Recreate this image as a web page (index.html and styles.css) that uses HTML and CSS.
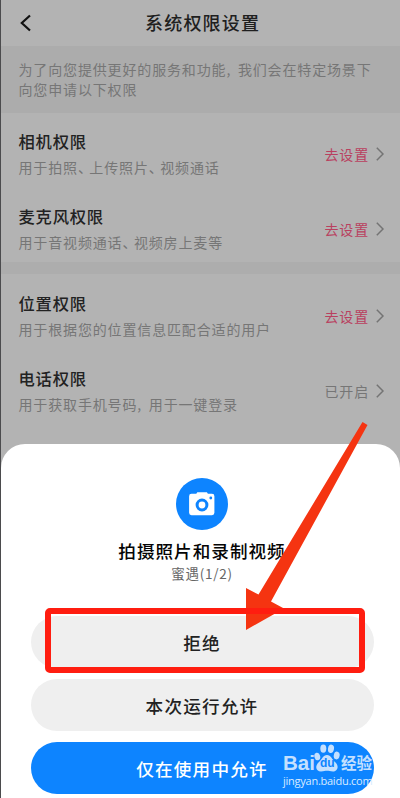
FILE: index.html
```html
<!DOCTYPE html>
<html lang="zh-CN">
<head>
<meta charset="utf-8">
<title>系统权限设置</title>
<link rel="stylesheet" href="styles.css">
</head>
<body>
<div class="screen">
  <header class="topbar">
    <svg class="back" viewBox="0 0 12 18"><path d="M10 1.500 1.800 9l8.200 7.500"/></svg>
    <h1>系统权限设置</h1>
  </header>
  <p class="notice">为了向您提供更好的服务和功能<span class="comma">,</span>我们会在特定场景下<br>向您申请以下权限</p>
  <main>
    <section class="group">
      <div class="item">
        <div class="info"><h2>相机权限</h2><p>用于拍照<span class="punct">、</span>上传照片<span class="punct">、</span>视频通话</p></div>
        <a class="action">去设置<svg class="chev" viewBox="0 0 8 14"><path d="M.8.8 7 7 .8 13.200"/></svg></a>
      </div>
      <div class="item">
        <div class="info"><h2>麦克风权限</h2><p>用于音视频通话<span class="punct">、</span>视频房上麦等</p></div>
        <a class="action">去设置<svg class="chev" viewBox="0 0 8 14"><path d="M.8.8 7 7 .8 13.200"/></svg></a>
      </div>
    </section>
    <section class="group">
      <div class="item">
        <div class="info"><h2>位置权限</h2><p>用于根据您的位置信息匹配合适的用户</p></div>
        <a class="action">去设置<svg class="chev" viewBox="0 0 8 14"><path d="M.8.8 7 7 .8 13.200"/></svg></a>
      </div>
      <div class="item">
        <div class="info"><h2>电话权限</h2><p>用于获取手机号码<span class="comma">,</span>用于一键登录</p></div>
        <a class="action on">已开启<svg class="chev" viewBox="0 0 8 14"><path d="M.8.8 7 7 .8 13.200"/></svg></a>
      </div>
    </section>
  </main>
  <div class="sheet">
    <svg class="camera" viewBox="0 0 52 52">
      <circle cx="26" cy="26" r="26" fill="#0d84ff"/>
      <path fill="#fff" d="M15.500 15.800h4.800l1-1.500h9.600l1 1.500h4.100a2.400 2.400 0 0 1 2.400 2.400v16.600a2.400 2.400 0 0 1-2.400 2.400h-20.500a2.400 2.400 0 0 1-2.400-2.400V18.200a2.400 2.400 0 0 1 2.400-2.400z"/>
      <circle cx="26" cy="27" r="4.900" fill="none" stroke="#0d84ff" stroke-width="3"/>
      <circle cx="34.800" cy="20" r="1.400" fill="#0d84ff"/>
    </svg>
    <h2 class="ask">拍摄照片和录制视频</h2>
    <p class="app">蜜遇(1/2)</p>
    <div class="buttons">
      <button>拒绝</button>
      <button>本次运行允许</button>
      <button class="primary">仅在使用中允许</button>
    </div>
  </div>
  <svg class="arrow" viewBox="0 0 124 212"><path fill="#f53411" d="M117.500 2 122.500 5 26 181.500 39 188.500 1 210V168l12.500 6.500z"/></svg>
  <div class="highlight"></div>
  <div class="watermark">
    <div class="brand">
      <span class="bai">Bai</span>
      <span class="paw">
        <svg viewBox="0 0 26 28"><g fill="currentColor"><ellipse cx="3.300" cy="12.500" rx="2.900" ry="3.800" transform="rotate(-15 3.300 12.500)"/><ellipse cx="9.300" cy="4.600" rx="3" ry="4.200"/><ellipse cx="17" cy="4.800" rx="3" ry="4.200" transform="rotate(10 17 4.800)"/><ellipse cx="22.700" cy="11.500" rx="2.900" ry="3.900" transform="rotate(12 22.700 11.500)"/><path d="M13 11c4 0 5 4.500 8 7 5 4.500 2 9.500-2 9.500-3 0-4-.7-6-.7s-3 .7-6 .7c-4.500 0-7-5-2-9.500 3-2.500 4-7 8-7z"/></g></svg>
        <span class="du">du</span>
      </span>
      <span class="jy">经验</span>
    </div>
    <div class="url">jingyan.baidu.com</div>
  </div>
</div>
</body>
</html>
```
FILE: styles.css
```css
* { box-sizing: border-box; }
body, h1, h2, p { margin: 0; }
body {
  width: 400px;
  height: 798px;
  overflow: hidden;
  font-family: "Noto Sans CJK SC", sans-serif;
}
.screen {
  position: relative;
  display: flex;
  flex-direction: column;
  height: 798px;
  overflow: hidden;
  background: #b3b3b3;
  border-left: 1px solid #4b4b4d;
}
.topbar {
  display: flex;
  align-items: center;
  height: 46px;
  padding: 0 0 1px 19px;
}
.back { width: 12px; height: 18px; fill: none; stroke: #111; stroke-width: 2.2; }
h1 {
  margin-left: 113px;
  font-size: 18px;
  font-weight: 500;
  line-height: 45px;
  letter-spacing: 1.2px;
  color: #1f1f1f;
}
.notice {
  height: 67px;
  padding: 14px 0 0 17.5px;
  background: #acacac;
  color: #767676;
  font-size: 14px;
  line-height: 19.5px;
  letter-spacing: .85px;
  white-space: nowrap;
}
.comma { display: inline-block; width: 11.5px; }
.punct { margin-right: 3.6px; font-feature-settings: "halt"; }
.group + .group { border-top: 12px solid #adadad; padding-top: 1px; }
.item {
  display: flex;
  justify-content: space-between;
  height: 74.5px;
  padding: 16.4px 16px 0 17.5px;
}
.item h2 {
  font-size: 16.3px;
  font-weight: 500;
  line-height: 24px;
  letter-spacing: .8px;
  color: #222;
}
.item p {
  margin-top: 2px;
  font-size: 14px;
  line-height: 24px;
  letter-spacing: .85px;
  color: #767676;
  white-space: nowrap;
}
.action {
  display: flex;
  align-items: center;
  height: 50px;
  font-size: 14px;
  letter-spacing: .83px;
  color: #b9405f;
}
.action.on { color: #767676; }
.chev {
  width: 8px;
  height: 14px;
  margin-left: 7px;
  fill: none;
  stroke: #747474;
  stroke-width: 1.5;
}
.sheet {
  display: flex;
  flex-direction: column;
  align-items: center;
  flex: 1;
  margin-top: 20px;
  padding: 34.5px 27px 0 30px;
  background: #fff;
  border-radius: 24px 24px 0 0;
}
main { height: 310.5px; }
.camera { width: 52px; height: 52px; flex: none; }
.ask {
  margin-top: 7.5px;
  font-size: 17.6px;
  font-weight: 500;
  line-height: 26px;
  letter-spacing: 1px;
  color: #050505;
}
.app {
  font-size: 13.5px;
  line-height: 18px;
  letter-spacing: .75px;
  color: #666;
}
.buttons {
  display: flex;
  flex-direction: column;
  gap: 11px;
  width: 343px;
  margin-top: 34.5px;
}
button {
  height: 52px;
  padding: 0;
  border: 0;
  border-radius: 26px;
  background: #efefef;
  color: #222;
  font-family: inherit;
  font-size: 17.6px;
  font-weight: 500;
  letter-spacing: 1.2px;
}
button.primary { background: #0d84ff; color: #fff; }
.arrow {
  position: absolute;
  left: 244px;
  top: 420px;
  width: 124px;
  height: 212px;
}
.highlight {
  position: absolute;
  left: 43.5px;
  top: 608px;
  width: 320px;
  height: 64.5px;
  border: 6px solid #ff1d10;
  border-radius: 5px;
}
.watermark {
  position: absolute;
  left: 282px;
  top: 744px;
  width: 92px;
  color: #c4e0ff;
}
.brand { display: flex; align-items: flex-end; height: 28px; }
.bai {
  width: 31px;
  font: bold 20.5px/18px "Liberation Sans", sans-serif;
}
.paw { position: relative; width: 26px; height: 28px; }
.paw svg { display: block; width: 26px; height: 28px; }
.du {
  position: absolute;
  left: 6px;
  top: 13px;
  font: bold 12px/13px "Liberation Sans", sans-serif;
  color: #0d84ff;
}
.jy {
  margin-left: 1px;
  font-size: 15.5px;
  font-weight: 700;
  line-height: 20px;
}
.url {
  margin-top: 2px;
  font: 11px/14px "Open Sans", sans-serif;
  letter-spacing: -.25px;
  color: #d8ebff;
}
```
